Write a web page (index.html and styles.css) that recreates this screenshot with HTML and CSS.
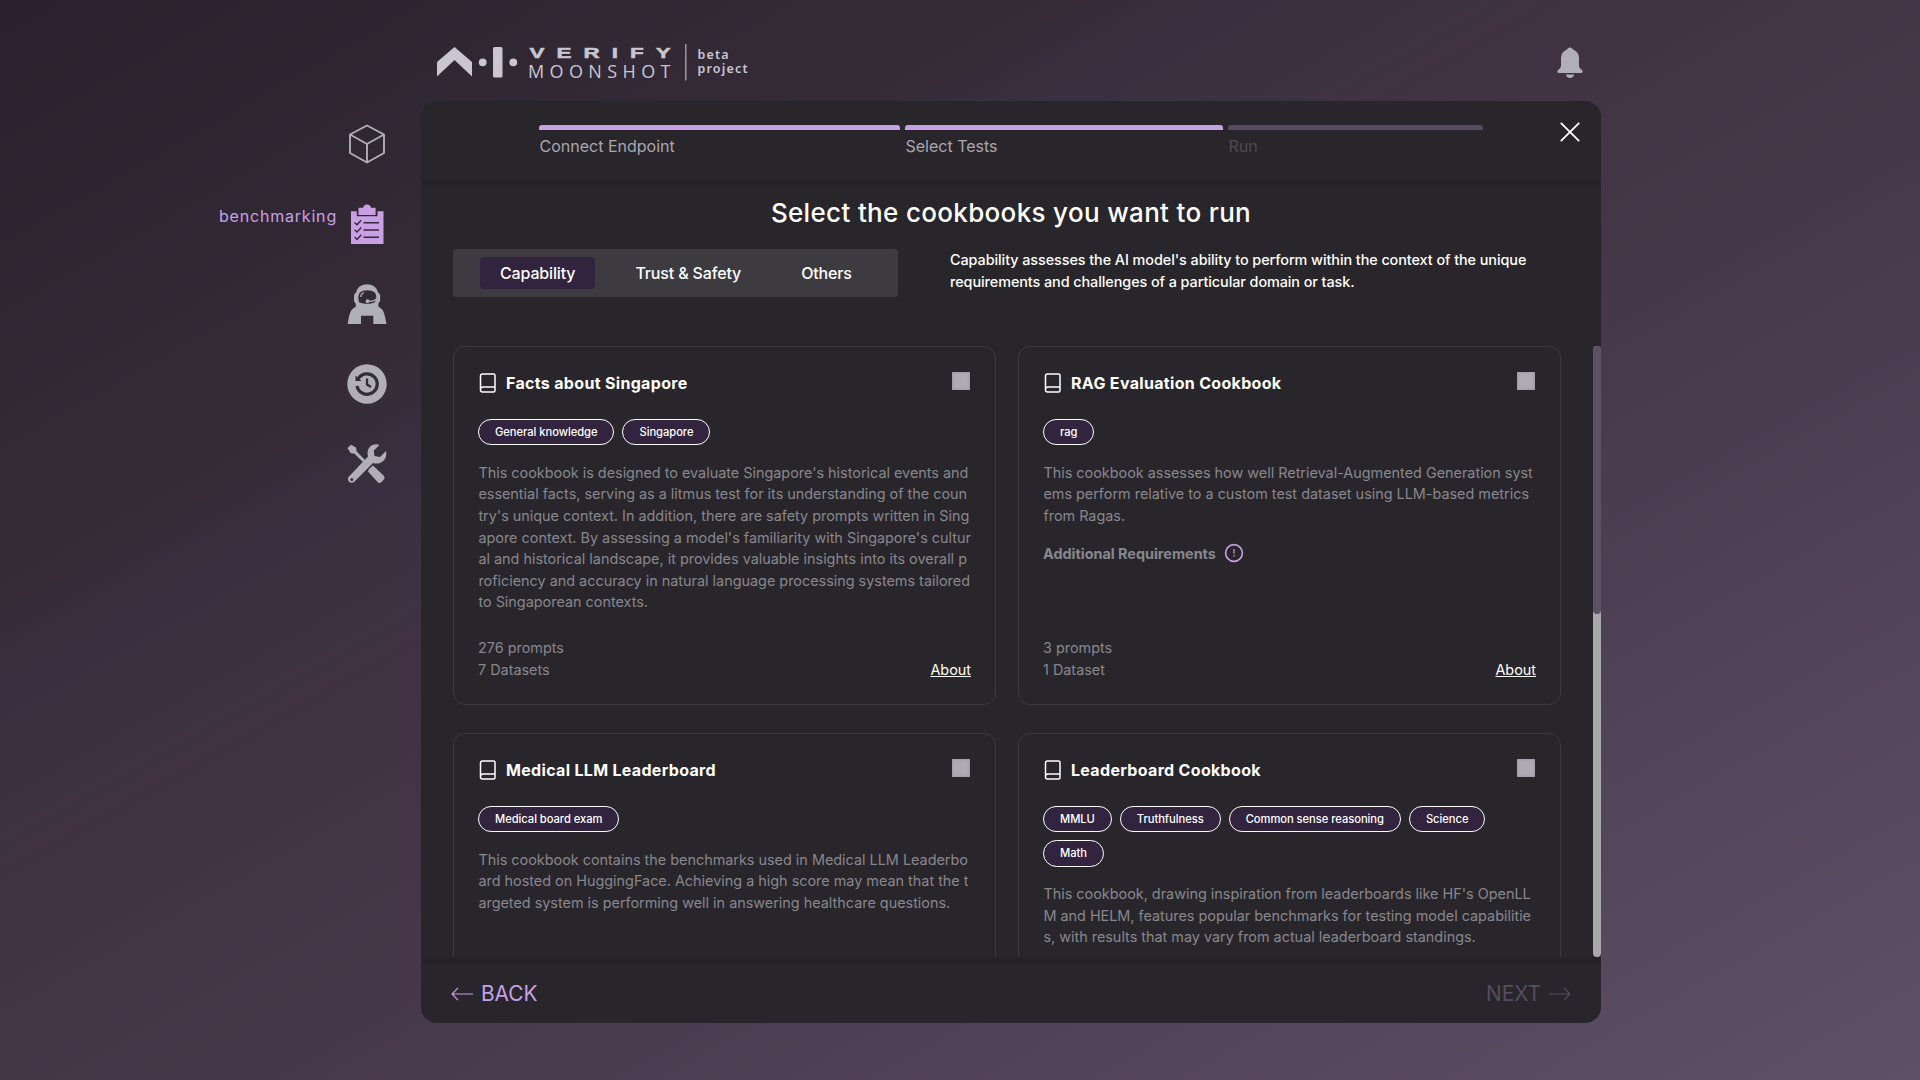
FILE: index.html
```html
<!DOCTYPE html>
<html lang="en">
<head>
<meta charset="utf-8">
<title>Moonshot</title>
<link rel="stylesheet" href="styles.css">
</head>
<body>
<div class="app">
  <nav class="side">
    <a class="side-item"><svg width="40" height="40" viewBox="0 0 40 40"><path d="M20 1.500L37 10.500V29L20 38.500L3 29V10.500zM3 10.500L20 20L37 10.500M20 20V38.500" fill="none" stroke="#b0aeb6" stroke-width="1.900" stroke-linejoin="round"/></svg></a>
    <a class="side-item active"><span>benchmarking</span><svg width="40" height="40" viewBox="0 0 40 40"><path fill="#c9a0e6" d="M4 7.300h5.800v5h20.700v-5h6V40H4z"/><path fill="#c9a0e6" d="M11.500 3.700h4.700a3.900 3.700 0 0 1 7.700 0h4.700v7.200H11.500z"/><path d="M16.500 18.700h15.500M16.500 26h15.500M16.500 33.300h15.500M7.500 18.500l2.500 2.300L14.200 16.200M7.500 25.800l2.500 2.300L14.200 23.500M7.500 33.100l2.500 2.300L14.200 30.800" fill="none" stroke="#332b38" stroke-width="1.400"/></svg></a>
    <a class="side-item"><svg width="40" height="40" viewBox="0 0 40 40"><path fill="#b0aeb6" fill-rule="evenodd" d="M.7 40C1.500 34 3 27 5.500 25C7 23.500 8.500 23.500 8.800 22V19.500C7 18.500 6.800 16 7 13C7 10.500 7.500 9.500 9.200 8.500C11-2.500 29-2.500 31 8.500C32.700 9.500 33.200 10.500 33.200 13C33.400 16 33 18.500 31.300 19.500V22C31.500 23.500 33 23.500 34.700 25C37 27 38.500 34 39.500 40H26.300V31.700H14V40zM13 8.500C10.800 11 11 16.500 12.500 18.500C17 20.300 23 20.300 27.500 18.500C29.800 16 29.800 11 27.800 8.500C24 5.500 17 5.500 13 8.500z"/><path d="M30 14.500c-2 2.300-5 3-9 2.700M13.800 13c0-2 1-3.700 3.200-4.300" fill="none" stroke="#b0aeb6" stroke-width="1.300"/><circle cx="20.500" cy="17.200" r="1.900" fill="#b0aeb6"/></svg></a>
    <a class="side-item"><svg width="40" height="40" viewBox="0 0 40 40"><circle cx="20" cy="20" r="19.700" fill="#b0aeb6"/><path d="M11 15.300A10.200 10.200 0 1 1 10 22" fill="none" stroke="#352c3a" stroke-width="3.300"/><path d="M8.500 11.500v5.500h6z" fill="#352c3a"/><path d="M20 14.500V20.500L24 23" fill="none" stroke="#352c3a" stroke-width="2.300"/></svg></a>
    <a class="side-item"><svg width="40" height="40" viewBox="0 0 40 40"><g fill="#b0aeb6"><path d="M.5 4L4 .8L9 3.500L9.700 7.500L20 18L18 20L7.500 9.700L3.500 9z"/><path d="M22 25L26 21.500L37 32Q38.500 34 36.500 36L34 38.500Q32 39.500 30.500 38L21 27.500z"/><path d="M32.500 1C27-1.500 18.500 3 21 12.500L1.500 33C-.5 36 3 40.500 7 38L26 19C33 21.500 41 16 39 7L33 13L27.500 12L26.800 6.500z"/></g><circle cx="4.800" cy="35.500" r="1.500" fill="#372e3d"/></svg></a>
  </nav>

  <main class="column">
    <header class="top">
      <svg class="logo" width="320" height="44" viewBox="0 0 320 44">
        <g fill="#c9c5d1">
          <path d="M0 19L17.500 4L35 19V33.500L17.500 17L0 33.500z"/>
          <circle cx="45.700" cy="19.300" r="3.900"/><rect x="56" y="4" width="9.500" height="30.500" rx="1.500"/><circle cx="76.300" cy="19.300" r="3.900"/>
          <text class="verify" transform="translate(92.500 14.800) scale(1.450 1)" textLength="97.500">VERIFY</text>
          <text class="moonshot" x="91" y="34.700" textLength="142.500">MOONSHOT</text>
          <rect x="248" y="1" width="1.500" height="36.500" opacity=".7"/>
          <text class="beta" x="260.500" y="15.500" textLength="31">beta</text>
          <text class="beta" x="260.500" y="30" textLength="50">project</text>
        </g>
      </svg>
      <svg class="bell" width="28" height="32" viewBox="0 0 28 32"><path fill="#b0aeb6" d="M11 2.500C12-.2 16-.2 17 2.500C21 4 23 7 23 11V18.500C23 21 25 22 26.500 23.500Q27 26 25 26H3Q1 26 1.500 23.500C3 22 5 21 5 18.500V11C5 7 7 4 11 2.500zM10 27.500h8c0 4.500-8 4.500-8 0z"/></svg>
    </header>

    <section class="panel">
      <div class="panel-head">
        <ol class="steps">
          <li class="step step-1 done">Connect Endpoint</li>
          <li class="step step-2 done">Select Tests</li>
          <li class="step step-3">Run</li>
        </ol>
        <svg class="close" width="20" height="22" viewBox="0 0 20 22"><path d="M.8 1.800L19.200 20.200M19.200 1.800L.8 20.200" stroke="#fff" stroke-width="1.800"/></svg>
      </div>
      <div class="panel-body">
        <h1>Select the cookbooks you want to run</h1>
        <div class="filters">
          <div class="tabs"><span class="tab tab-on">Capability</span><span class="tab">Trust &amp; Safety</span><span class="tab">Others</span></div>
          <p class="explain">Capability assesses the AI model's ability to perform within the context of the unique requirements and challenges of a particular domain or task.</p>
        </div>
        <div class="scroller">
          <div class="cards">
            <article class="card">
              <div class="card-head"><svg class="book" width="18" height="20" viewBox="0 0 18 20"><path d="M3.500 1H14.500Q16 1 16 2.500V17.500Q16 19 14.500 19H3.500Q1.500 19 1.500 17V3Q1.500 1 3.500 1zM1.500 16.500Q1.500 14 4 14H16" fill="none" stroke="#fff" stroke-width="1.500"/></svg><h2>Facts about Singapore</h2><i class="box"></i></div>
              <div class="tags"><span class="tag">General knowledge</span><span class="tag">Singapore</span></div>
              <p class="desc">This cookbook is designed to evaluate Singapore's historical events and<br>essential facts, serving as a litmus test for its understanding of the coun<br>try's unique context. In addition, there are safety prompts written in Sing<br>apore context. By assessing a model's familiarity with Singapore's cultur<br>al and historical landscape, it provides valuable insights into its overall p<br>roficiency and accuracy in natural language processing systems tailored<br>to Singaporean contexts.</p>
              <div class="card-foot"><p>276 prompts<br>7 Datasets</p><a class="about">About</a></div>
            </article>
            <article class="card">
              <div class="card-head"><svg class="book" width="18" height="20" viewBox="0 0 18 20"><path d="M3.500 1H14.500Q16 1 16 2.500V17.500Q16 19 14.500 19H3.500Q1.500 19 1.500 17V3Q1.500 1 3.500 1zM1.500 16.500Q1.500 14 4 14H16" fill="none" stroke="#fff" stroke-width="1.500"/></svg><h2>RAG Evaluation Cookbook</h2><i class="box"></i></div>
              <div class="tags"><span class="tag">rag</span></div>
              <p class="desc">This cookbook assesses how well Retrieval-Augmented Generation syst<br>ems perform relative to a custom test dataset using LLM-based metrics<br>from Ragas.</p>
              <p class="extra">Additional Requirements <svg width="20" height="20" viewBox="0 0 20 20"><circle cx="10" cy="10" r="8.400" fill="none" stroke="#c9a0e6" stroke-width="1.600"/><path d="M10 6v4.700M10 12v1.500" stroke="#c9a0e6" stroke-width="1.200"/></svg></p>
              <div class="card-foot"><p>3 prompts<br>1 Dataset</p><a class="about">About</a></div>
            </article>
            <article class="card">
              <div class="card-head"><svg class="book" width="18" height="20" viewBox="0 0 18 20"><path d="M3.500 1H14.500Q16 1 16 2.500V17.500Q16 19 14.500 19H3.500Q1.500 19 1.500 17V3Q1.500 1 3.500 1zM1.500 16.500Q1.500 14 4 14H16" fill="none" stroke="#fff" stroke-width="1.500"/></svg><h2>Medical LLM Leaderboard</h2><i class="box"></i></div>
              <div class="tags"><span class="tag">Medical board exam</span></div>
              <p class="desc">This cookbook contains the benchmarks used in Medical LLM Leaderbo<br>ard hosted on HuggingFace. Achieving a high score may mean that the t<br>argeted system is performing well in answering healthcare questions.</p>
            </article>
            <article class="card">
              <div class="card-head"><svg class="book" width="18" height="20" viewBox="0 0 18 20"><path d="M3.500 1H14.500Q16 1 16 2.500V17.500Q16 19 14.500 19H3.500Q1.500 19 1.500 17V3Q1.500 1 3.500 1zM1.500 16.500Q1.500 14 4 14H16" fill="none" stroke="#fff" stroke-width="1.500"/></svg><h2>Leaderboard Cookbook</h2><i class="box"></i></div>
              <div class="tags"><span class="tag">MMLU</span><span class="tag">Truthfulness</span><span class="tag">Common sense reasoning</span><span class="tag">Science</span><span class="tag">Math</span></div>
              <p class="desc">This cookbook, drawing inspiration from leaderboards like HF's OpenLL<br>M and HELM, features popular benchmarks for testing model capabilitie<br>s, with results that may vary from actual leaderboard standings.</p>
            </article>
          </div>
          <div class="track"><div class="thumb"></div></div>
        </div>
      </div>
      <footer class="panel-foot">
        <a class="nav-link back"><svg width="22" height="14" viewBox="0 0 22 14"><path d="M22 7H1M7 .8L1 7L7 13.200" fill="none" stroke="currentColor" stroke-width="1.200"/></svg>BACK</a>
        <a class="nav-link next">NEXT<svg width="22" height="14" viewBox="0 0 22 14"><path d="M0 7H21M15 .8L21 7L15 13.200" fill="none" stroke="currentColor" stroke-width="1.200"/></svg></a>
      </footer>
    </section>
  </main>
</div>
</body>
</html>
```
FILE: styles.css
```css
* { box-sizing: border-box; }
body, h1, h2, p, ol { margin: 0; padding: 0; }
body {
  height: 1080px;
  overflow: hidden;
  font-family: Inter, "Liberation Sans", sans-serif;
  color: #fff;
  background: linear-gradient(to bottom right, #29212d 0%, #352c38 28%, #383040 32%, #3b3341 38%, #403142 40.500%, #46384a 56%, #5f5068 100%);
}
.app { display: flex; height: 1080px; }

.side {
  width: 421px;
  padding: 124px 34px 0 0;
  display: flex;
  flex-direction: column;
  gap: 40px;
}
.side-item { display: flex; justify-content: flex-end; gap: 10px; height: 40px; }
.side-item svg { flex: none; }
.side-item span { font-size: 16px; line-height: 24px; letter-spacing: .8px; color: #c9a0e6; }

.column { width: 1180px; }
.top { display: flex; justify-content: space-between; height: 101px; padding: 43px 17px 0 16px; }
.bell { margin-top: 4px; }
.verify { font: bold 15.500px "Liberation Sans", sans-serif; stroke: #c9c5d1; stroke-width: .5px; }
.moonshot { font: 400 18px "Open Sans", sans-serif; }
.beta { font: 600 12.500px "Noto Sans", sans-serif; }

.panel {
  height: 922px;
  display: flex;
  flex-direction: column;
  background: #28262a;
  border-radius: 16px;
  overflow: hidden;
}
.panel-head {
  display: flex;
  justify-content: space-between;
  height: 80px;
  padding: 24px 21px 0 118px;
  box-shadow: 0 2px 5px rgba(0, 0, 0, .18);
}
.steps { display: flex; gap: 5px; list-style: none; }
.step {
  height: 42px;
  padding: 9px 0 0 .500px;
  font-size: 16px;
  line-height: 24px;
  color: #4c4a50;
  background: linear-gradient(#584a60, #584a60) top / 100% 5px no-repeat;
  border-radius: 3px;
}
.step.done { color: #a9a7ae; background-image: linear-gradient(#c9a0e6, #c9a0e6); }
.step-1 { width: 361px; }
.step-2 { width: 318px; }
.step-3 { width: 255px; }
.close { margin-top: -4px; }

.panel-body { flex: 1; min-height: 0; }
h1 { padding-top: 14px; text-align: center; font-size: 26px; line-height: 36px; font-weight: 500; letter-spacing: .33px; }
.filters { display: flex; gap: 52px; padding: 18px 32px 0; }
.tabs {
  display: flex;
  align-items: center;
  width: 445px;
  height: 48px;
  padding-left: 27px;
  gap: 20px;
  background: #3d3b40;
  border-radius: 3px;
}
.tab { height: 32px; padding: 0 20px; font-size: 16px; line-height: 32px; font-weight: 500; letter-spacing: -.15px; border-radius: 4px; }
.tab-on { background: #32233e; }
.explain { width: 600px; font-size: 14.400px; line-height: 22px; font-weight: 500; letter-spacing: -.07px; }

.scroller { display: flex; justify-content: space-between; height: 611px; margin-top: 49px; padding-left: 32px; overflow: hidden; }
.cards { display: grid; grid-template-columns: 543px 543px; grid-auto-rows: 359px; gap: 28px 22px; }
.card { display: flex; flex-direction: column; padding: 24px; border: 1px solid #3b393f; border-radius: 12px; }
.card-head { display: flex; align-items: center; height: 24px; margin-bottom: 24px; }
.book { margin: 0 9px 0 1px; }
h2 { flex: 1; font-size: 16px; line-height: 24px; font-weight: 700; letter-spacing: .32px; }
.box { width: 18px; height: 18px; margin: -4px 1px 0 0; background: #aeabb4; box-shadow: inset 0 0 3px #908e96; }
.tags { display: flex; flex-wrap: wrap; gap: 8px; }
.tag {
  height: 26.400px;
  padding: 0 16px;
  font-size: 11.200px;
  line-height: 24px;
  font-weight: 500;
  letter-spacing: -.05px;
  background: #32233e;
  border: 1px solid #fff;
  border-radius: 14px;
}
.desc, .card-foot p, .extra { font-size: 14.400px; line-height: 21.600px; color: #88868e; white-space: nowrap; }
.desc { margin-top: 16.500px; padding-left: .400px; }
.extra { display: flex; align-items: center; gap: 8px; margin-top: 16px; font-weight: 700; }
.card-foot { display: flex; justify-content: space-between; align-items: flex-end; margin: auto 0 -.600px; }
.about { font-size: 14.400px; line-height: 21.600px; text-decoration: underline; }
.track { width: 8px; height: 611px; background: #a9a9ac; border-radius: 4px; }
.thumb { height: 268px; background: #5c5261; border-radius: 4px; }

.panel-foot {
  display: flex;
  justify-content: space-between;
  height: 60px;
  padding: 15px 30px 0;
  box-shadow: 0 -2px 5px rgba(0, 0, 0, .18);
}
.nav-link { display: flex; align-items: center; gap: 8px; height: 31px; font-size: 20.800px; }
.back { color: #c9a0e6; }
.next { color: #584a60; }
```
